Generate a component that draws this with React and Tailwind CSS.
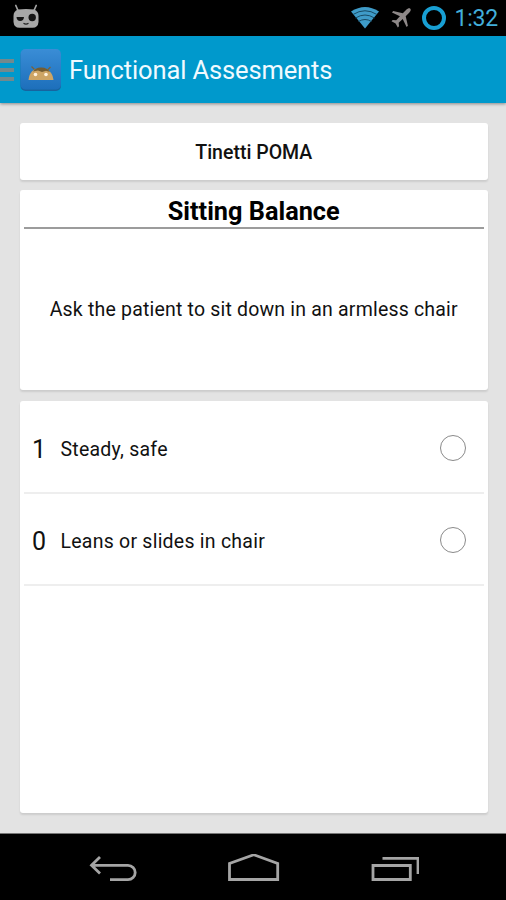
import { useState } from "react";

const answers = [
  { score: 1, label: "Steady, safe" },
  { score: 0, label: "Leans or slides in chair" },
];

function RobotIcon() {
  return (
    <svg className="mb-[3px] h-[25px] w-[28px]" viewBox="0 0 28 25">
      <path d="M3.800 1.500L6 6.500M24.200 1.500L22 6.500" stroke="#a3a3a3" strokeWidth="1.700" strokeLinecap="round" />
      <path
        d="M6 5.500Q14 4.300 22 5.500Q26.500 7 26.500 12V18Q26 23.800 20.500 23.800H7.500Q2 23.800 1.500 18V12Q1.500 7 6 5.500Z"
        fill="#a8a8a8"
      />
      <path d="M4.500 13H12Q11.700 17 8.200 17Q4.800 17 4.500 13Z" fill="#151515" />
      <circle cx="20.200" cy="13.500" r="3.700" fill="#151515" />
      <path d="M11.500 19.300Q14 20.800 16.500 19.300" stroke="#222" strokeWidth="1.200" fill="none" />
    </svg>
  );
}

function WifiIcon() {
  return (
    <svg className="h-[22px] w-[28px]" viewBox="0 0 28 22">
      <path d="M0 4.500Q14 -4.500 28 4.500L14 21.500Z" fill="#3f9bc8" />
      <path
        d="M2 7.500Q14 0 26 7.500M4.500 11Q14 5 23.500 11M7.500 14.500Q14 10.500 20.500 14.500"
        stroke="#174a64"
        strokeWidth="1"
        fill="none"
      />
    </svg>
  );
}

function PlaneIcon() {
  return (
    <svg className="h-[20px] w-[20px]" viewBox="0 0 20 20" fill="#8e8888">
      <path d="M19.300 0.700C18.300 -0.300 16.500 0.600 15.500 1.600L11.800 5.300L2.200 3.100L1 4.400L8.900 8.300L5.200 12.300L1.700 12L0.500 13.200L4.600 15.400L6.800 19.500L8 18.300L7.700 14.800L11.700 11.100L15.600 19L16.900 17.800L14.700 8.200L18.400 4.500C19.400 3.500 20.300 1.700 19.300 0.700Z" />
    </svg>
  );
}

function StatusBar() {
  return (
    <div className="flex h-[36px] items-center bg-black pr-[8px] pl-[12px]">
      <RobotIcon />
      <div className="ml-auto flex items-center">
        <WifiIcon />
        <div className="ml-[12px]">
          <PlaneIcon />
        </div>
        <div className="ml-[11px] h-[24px] w-[24px] rounded-full border-[4px] border-[#189fd3]" />
        <span className="ml-[8px] pt-px text-[23px] leading-none tracking-[-0.2px] text-[#42aeda]">1:32</span>
      </div>
    </div>
  );
}

function AppIcon() {
  return (
    <svg className="h-[44px] w-[42px]" viewBox="0 0 42 44">
      <defs>
        <linearGradient id="tile" x1="0" y1="0" x2="0" y2="1">
          <stop offset="0" stopColor="#3a8dd6" />
          <stop offset="1" stopColor="#1d6fbb" />
        </linearGradient>
      </defs>
      <rect x="0.500" y="2" width="40.500" height="41" rx="5" fill="#17649f" />
      <rect x="0.500" y="1" width="40.500" height="40.500" rx="5" fill="url(#tile)" />
      <path d="M11.500 18.500L15 22M30.500 19L27 22.500" stroke="#796239" strokeWidth="1.200" />
      <path d="M8.500 32Q9.500 20.500 21 20Q32 20.500 33.500 32Z" fill="#cda565" />
      <path d="M13 23.500Q16 19.300 21 19.500Q27 19.300 30 24L26 22.700L22 24L18 22.500Z" fill="#735d32" />
      <circle cx="15.500" cy="26.500" r="1.800" fill="#fff2dc" />
      <circle cx="26" cy="26.500" r="1.800" fill="#fff2dc" />
    </svg>
  );
}

function ActionBar() {
  return (
    <header className="relative flex h-[67px] items-center bg-[#0099cc] shadow-[0_1px_3px_rgba(0,0,0,0.4)]">
      <div className="flex w-[14px] flex-col gap-[5px]">
        <div className="h-[4px] bg-[#72898d]" />
        <div className="h-[4px] bg-[#72898d]" />
        <div className="h-[4px] bg-[#72898d]" />
      </div>
      <div className="ml-[6px]">
        <AppIcon />
      </div>
      <h1 className="ml-[7px] pt-[3px] text-[25.500px] leading-none tracking-[-0.13px] whitespace-nowrap text-[#f0faff]">
        Functional Assesments
      </h1>
    </header>
  );
}

function Card({ className, children }) {
  return (
    <section className={`rounded-[3px] bg-white shadow-[0_2px_2px_rgba(0,0,0,0.1)] ${className}`}>
      {children}
    </section>
  );
}

function NavBar() {
  return (
    <nav className="flex h-[67px] items-center justify-center border-t border-[#777] bg-black">
      <svg className="mt-[2px] h-[28px] w-[332px]" viewBox="87 854 332 28" fill="none" stroke="#a5a5a5" strokeWidth="2.800">
        <path d="M100 857L91.500 865.300L100 873.500M92 865.300H128A7 7 0 0 1 128 879.700H110" />
        <path d="M229.500 879.500V863.500L253.800 854.800L277.700 863.500V879.500Z" />
        <path d="M373 865.500H410.300V879.500H373ZM382.500 858.300H418V874" />
      </svg>
    </nav>
  );
}

export default function App() {
  const [selected, setSelected] = useState(null);

  return (
    <div className="flex h-[900px] w-[506px] flex-col overflow-hidden bg-[#e3e3e3] font-[Roboto,sans-serif] text-[#111]">
      <StatusBar />
      <ActionBar />
      <main className="flex flex-1 flex-col pt-[20px] pr-[18.500px] pb-[20px] pl-[20px]">
        <Card className="flex h-[57px] items-center justify-center">
          <h2 className="pt-[2px] text-[19.500px] font-medium">Tinetti POMA</h2>
        </Card>

        <Card className="mt-[10px] flex h-[200px] flex-col px-[4px]">
          <h3 className="flex h-[39px] items-center justify-center border-b-2 border-[#9c9c9c] pt-[6px] text-[25.300px] font-bold text-black">
            Sitting Balance
          </h3>
          <p className="flex flex-1 items-center justify-center text-[19.500px] tracking-[0.19px] whitespace-nowrap">
            Ask the patient to sit down in an armless chair
          </p>
        </Card>

        <Card className="mt-[11px] flex-1 px-[4px] pt-px">
          {answers.map((answer) => (
            <button
              key={answer.score}
              type="button"
              className="flex h-[92px] w-full items-center border-b-2 border-[#eeeeee] pt-[3px] pr-[18px] pl-[8px] text-left"
              onClick={() => setSelected(answer.score)}
            >
              <span className="w-[28.500px] pt-[2px] text-[25px]">{answer.score}</span>
              <span className="pt-[2px] text-[19.500px] tracking-[0.24px]">{answer.label}</span>
              <span className="mb-px ml-auto flex h-[26px] w-[26px] items-center justify-center rounded-full border-[1.500px] border-[#8a8a8a]">
                {selected === answer.score && <span className="h-3 w-3 rounded-full bg-[#0099cc]" />}
              </span>
            </button>
          ))}
        </Card>
      </main>
      <NavBar />
    </div>
  );
}
